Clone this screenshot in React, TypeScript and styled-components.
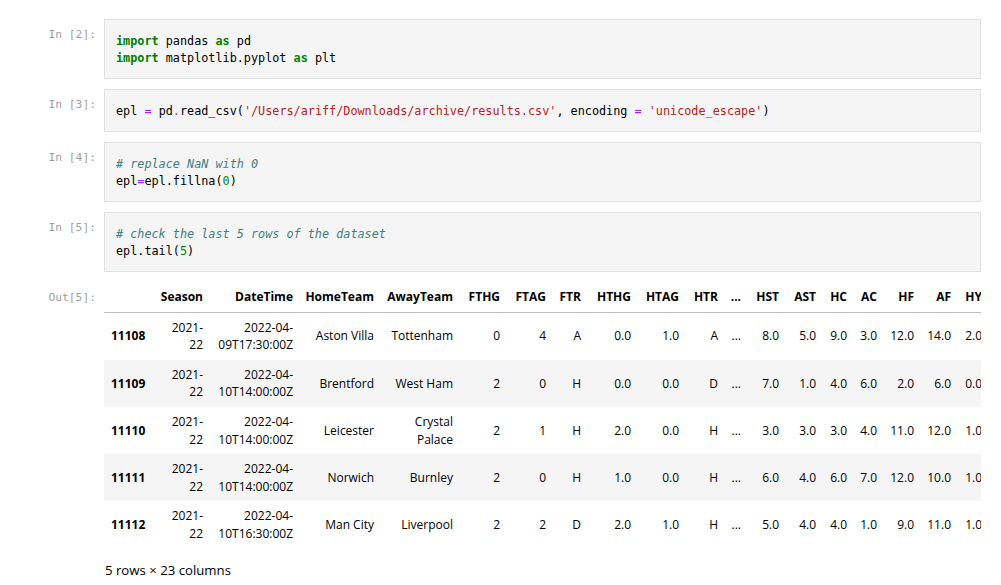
import React from "react";
import styled, { createGlobalStyle } from "styled-components";

const Global = createGlobalStyle`
  html, body { margin: 0; padding: 0; background: #fff; }
  body { font-family: "Open Sans", "Noto Sans", sans-serif; color: #000; }
`;

const Notebook = styled.div`
  display: flex;
  flex-direction: column;
  gap: 10px;
  padding: 19px 20px 0 0;
  width: 1001px;
  box-sizing: border-box;
`;

const Cell = styled.div`
  display: flex;
  align-items: flex-start;
`;

const Prompt = styled.div`
  flex: 0 0 104px;
  box-sizing: border-box;
  padding: 7px 8px 0 0;
  text-align: right;
  font-family: "DejaVu Sans Mono", "Liberation Mono", monospace;
  font-size: 11.3px;
  line-height: 17px;
  color: #9e9e9e;
  white-space: pre;
`;

const InputArea = styled.pre`
  flex: 1;
  margin: 0;
  background: #f5f5f5;
  border: 1px solid #e0e0e0;
  padding: 13px 11px 11px;
  font-family: "DejaVu Sans Mono", "Liberation Mono", monospace;
  font-size: 11.8px;
  line-height: 17px;
  color: #000;
  white-space: pre;
  overflow: hidden;
`;

const Kw = styled.span`
  color: #008000;
  font-weight: bold;
`;
const Op = styled.span`
  color: #aa22ff;
`;
const Str = styled.span`
  color: #ba2121;
`;
const Num = styled.span`
  color: #008800;
`;
const Comment = styled.span`
  color: #408080;
  font-style: italic;
`;

const OutputRow = styled.div`
  display: flex;
  align-items: flex-start;
`;

const OutputBody = styled.div`
  flex: 1;
  min-width: 0;
  display: flex;
  flex-direction: column;
`;

const TableClip = styled.div`
  overflow: hidden;
  width: 100%;
`;

const DataTable = styled.table`
  border-collapse: collapse;
  border-spacing: 0;
  table-layout: fixed;
  font-size: 12px;
  line-height: 17.6px;
  color: #000;
`;

const HeadRow = styled.tr`
  border-bottom: 1px solid #bdbdbd;
`;

const HeadCell = styled.th`
  padding: 6px;
  text-align: right;
  vertical-align: bottom;
  font-weight: bold;
  white-space: nowrap;
`;

const BodyRow = styled.tr<{ $shaded: boolean }>`
  background: ${(p) => (p.$shaded ? "#f5f5f5" : "#fff")};
`;

const IndexCell = styled.th`
  padding: 6px 6px 6px 7px;
  text-align: left;
  vertical-align: middle;
  font-weight: bold;
`;

const DataCell = styled.td`
  padding: 6px;
  text-align: right;
  vertical-align: middle;
  white-space: pre-line;
`;

const Footer = styled.p`
  margin: 11px 0 0 1px;
  font-size: 13.2px;
  line-height: 20px;
`;

const columns: { name: string; width: number }[] = [
  { name: "", width: 50 },
  { name: "Season", width: 55 },
  { name: "DateTime", width: 90 },
  { name: "HomeTeam", width: 81 },
  { name: "AwayTeam", width: 79 },
  { name: "FTHG", width: 47 },
  { name: "FTAG", width: 46 },
  { name: "FTR", width: 35 },
  { name: "HTHG", width: 50 },
  { name: "HTAG", width: 48 },
  { name: "HTR", width: 39 },
  { name: "...", width: 23 },
  { name: "HST", width: 38 },
  { name: "AST", width: 37 },
  { name: "HC", width: 31 },
  { name: "AC", width: 30 },
  { name: "HF", width: 37 },
  { name: "AF", width: 37 },
  { name: "HY", width: 31 },
  { name: "AY", width: 31 },
  { name: "HR", width: 31 },
  { name: "AR", width: 31 },
];

const rows: string[][] = [
  ["11108", "2021-\n22", "2022-04-\n09T17:30:00Z", "Aston Villa", "Tottenham", "0", "4", "A", "0.0", "1.0", "A", "...", "8.0", "5.0", "9.0", "3.0", "12.0", "14.0", "2.0", "1.0", "0.0", "0.0"],
  ["11109", "2021-\n22", "2022-04-\n10T14:00:00Z", "Brentford", "West Ham", "2", "0", "H", "0.0", "0.0", "D", "...", "7.0", "1.0", "4.0", "6.0", "2.0", "6.0", "0.0", "1.0", "0.0", "0.0"],
  ["11110", "2021-\n22", "2022-04-\n10T14:00:00Z", "Leicester", "Crystal\nPalace", "2", "1", "H", "2.0", "0.0", "H", "...", "3.0", "3.0", "3.0", "4.0", "11.0", "12.0", "1.0", "2.0", "0.0", "0.0"],
  ["11111", "2021-\n22", "2022-04-\n10T14:00:00Z", "Norwich", "Burnley", "2", "0", "H", "1.0", "0.0", "H", "...", "6.0", "4.0", "6.0", "7.0", "12.0", "10.0", "1.0", "1.0", "0.0", "0.0"],
  ["11112", "2021-\n22", "2022-04-\n10T16:30:00Z", "Man City", "Liverpool", "2", "2", "D", "2.0", "1.0", "H", "...", "5.0", "4.0", "4.0", "1.0", "9.0", "11.0", "1.0", "3.0", "0.0", "0.0"],
];

export default function App() {
  const tableWidth = columns.reduce((s, c) => s + c.width, 0);
  return (
    <>
      <Global />
      <Notebook>
        <Cell>
          <Prompt>In [2]:</Prompt>
          <InputArea>
            <Kw>import</Kw> pandas <Kw>as</Kw> pd{"\n"}
            <Kw>import</Kw> matplotlib.pyplot <Kw>as</Kw> plt
          </InputArea>
        </Cell>
        <Cell>
          <Prompt>In [3]:</Prompt>
          <InputArea>
            epl <Op>=</Op> pd<Op>.</Op>read_csv(<Str>'/Users/ariff/Downloads/archive/results.csv'</Str>, encoding <Op>=</Op>{" "}
            <Str>'unicode_escape'</Str>)
          </InputArea>
        </Cell>
        <Cell>
          <Prompt>In [4]:</Prompt>
          <InputArea>
            <Comment># replace NaN with 0</Comment>{"\n"}
            epl<Op>=</Op>epl.fillna(<Num>0</Num>)
          </InputArea>
        </Cell>
        <Cell>
          <Prompt>In [5]:</Prompt>
          <InputArea>
            <Comment># check the last 5 rows of the dataset</Comment>{"\n"}
            epl.tail(<Num>5</Num>)
          </InputArea>
        </Cell>
        <OutputRow>
          <Prompt>Out[5]:</Prompt>
          <OutputBody>
            <TableClip>
              <DataTable style={{ width: tableWidth }}>
                <colgroup>
                  {columns.map((c, i) => (
                    <col key={i} style={{ width: c.width }} />
                  ))}
                </colgroup>
                <thead>
                  <HeadRow>
                    {columns.map((c, i) => (
                      <HeadCell key={i}>{c.name}</HeadCell>
                    ))}
                  </HeadRow>
                </thead>
                <tbody>
                  {rows.map((r, ri) => (
                    <BodyRow key={ri} $shaded={ri % 2 === 1}>
                      <IndexCell>{r[0]}</IndexCell>
                      {r.slice(1).map((v, ci) => (
                        <DataCell key={ci}>{v}</DataCell>
                      ))}
                    </BodyRow>
                  ))}
                </tbody>
              </DataTable>
            </TableClip>
            <Footer>5 rows × 23 columns</Footer>
          </OutputBody>
        </OutputRow>
      </Notebook>
    </>
  );
}
